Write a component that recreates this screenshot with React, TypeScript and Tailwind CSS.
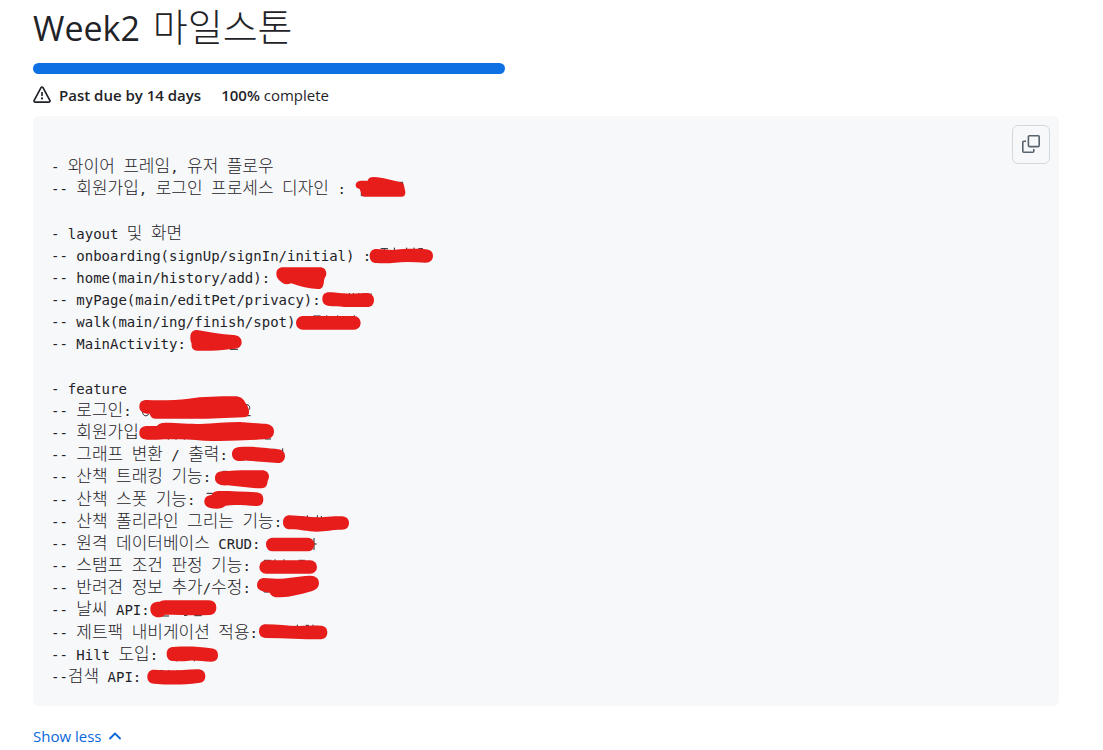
import { Fragment, useState } from "react";

const lines = [
  "- 와이어 프레임, 유저 플로우",
  "-- 회원가입, 로그인 프로세스 디자인 :",
  "",
  "- layout 및 화면",
  "-- onboarding(signUp/signIn/initial) :",
  "-- home(main/history/add):",
  "-- myPage(main/editPet/privacy):",
  "-- walk(main/ing/finish/spot)",
  "-- MainActivity:",
  "",
  "- feature",
  "-- 로그인:",
  "-- 회원가입",
  "-- 그래프 변환 / 출력:",
  "-- 산책 트래킹 기능:",
  "-- 산책 스폿 기능:",
  "-- 산책 폴리라인 그리는 기능:",
  "-- 원격 데이터베이스 CRUD:",
  "-- 스탬프 조건 판정 기능:",
  "-- 반려견 정보 추가/수정:",
  "-- 날씨 API:",
  "-- 제트팩 내비게이션 적용:",
  "-- Hilt 도입:",
  "--검색 API:",
];

function Line({ text }: { text: string }) {
  const parts = text.split(/([가-힣]+)/);
  return (
    <div className="h-[22px]">
      {parts.map((part, i) =>
        i % 2 === 1 ? (
          <span key={i} className="font-['Liberation_Mono','Noto_Sans_CJK_KR',monospace] text-[17px] font-light leading-none">
            {part}
          </span>
        ) : (
          <Fragment key={i}>{part}</Fragment>
        ),
      )}
    </div>
  );
}

/* Marker strokes that cover the assignee names. */
function Redactions() {
  return (
    <svg
      className="pointer-events-none absolute left-0 top-0"
      width="420"
      height="590"
      viewBox="33 116 420 590"
      aria-hidden="true"
    >
      <g stroke="#1f2328" strokeWidth="3" fill="none">
        <g transform="translate(260 145) scale(.33333)">
          <path d="M410 112h18v10M304 140v12h10M362 311h22M373 311v6M403 308v8M440 308v8M462 308v8M475 311h14" />
        </g>
        <g transform="translate(180 240) scale(.33333)">
          <path d="M508 159v8M520 159v8M537 159v8M550 159v8M573 160v38M400 228h22M411 228v6M440 226v8M473 226v8M494 230h14M523 226v8M150 328h24" />
        </g>
        <g transform="translate(40 380) scale(.33333)">
          <path d="M308 96c0 14 14 14 18 6M450 113h8M612 75c14-4 20 4 16 14M612 107h20M385 174v5M408 174v5M433 174v5M675 177h18M614 236v6M650 204v8M695 208h14M728 205v30M548 274h14" />
        </g>
        <g transform="translate(40 490) scale(.33333)">
          <path d="M500 10h18v8M780 80h10M802 76v8M832 76v8M844 78v6M700 144v8M728 144v8M765 144v8M822 144v36M822 162h8M672 211h22M705 208v6M732 208v6M775 211h20M672 292v14h14" />
        </g>
        <g transform="translate(40 590) scale(.33333)">
          <path d="M365 78h22M432 76h10M463 77h22M772 104v6M797 106h10M819 104v8M410 208v6M463 208v6M360 242h10M386 240v6M412 240v6M436 242h20" />
        </g>
      </g>
      <g fill="#e71d1c">
        <g transform="translate(260 145) scale(.33333)">
          <path d="M287 121c0-10 8-14 20-14h16c2-8 8-11 18-11 16 0 28 3 40 6l38 9c10 2 13 6 14 15l3 14c1 9-3 15-12 15H315c-8 0-12-4-12-12l-4-11c-7-1-12-4-12-11z" />
        </g>
        <g transform="translate(180 240) scale(.33333)">
          <path d="M569 48c0-14 8-21 20-21l48 3c30-3 70-5 100-2 15 1 22 9 22 20s-8 20-22 20c-32-2-65-4-92 0-18 2-38 2-56 1-12 0-20-8-20-21z" />
          <path d="M289 101c0-12 8-19 20-19h110c13 0 20 8 20 20 0 8-7 12-7 20-1 19-7 26-20 25-30-1-55-8-78-17-12 4-22 4-29-3-10-8-16-14-16-26z" />
          <path d="M427 177c0-14 8-20 20-20 25 0 37 4 62 4l51-2c13 0 22 8 22 21s-8 21-20 21h-70c-14-2-30-2-44-3-13-1-21-9-21-21z" />
          <rect x="348" y="228" width="194" height="41" rx="20" />
          <path d="M31 291c0-14 8-21 20-21 35 6 71 13 110 15 15 1 24 9 24 22 0 11-8 18-18 19-27 2-50 6-75 6H52c-12 0-19-9-17-21-3-5-4-12-4-20z" />
        </g>
        <g transform="translate(40 380) scale(.33333)">
          <path d="M298 80c0-14 8-20 22-20 40 1 86 1 126-4 42-6 90-7 137-7 19 0 28 8 34 21 8 10 11 20 10 29-1 9-7 12-17 13l-110 4H347c-10 0-15-5-18-15-18 1-31-7-31-21z" />
          <path d="M298 160c0-15 9-22 24-22h28c8-8 15-10 30-10 30 0 70 4 100 4 40-2 80-6 120-6l70 5c20 0 32 8 32 22 0 17-10 24-30 25-60 4-120 6-180 4-50-4-100-5-140-3h-32c-14-1-22-8-22-19z" />
          <path d="M576 222c0-13 8-20 22-21 44-3 81 3 117 7 13 2 20 10 20 20 0 13-9 22-22 21l-92-7c-8-1-13 2-22 1-14 0-23-8-23-21z" />
          <path d="M525 295c0-12 7-20 20-21 40-4 82-4 120-3 14 0 22 8 22 18 0 8-4 12-5 20-2 12-9 16-22 16-34-1-66-6-97-9-24 2-38-5-38-21z" />
        </g>
        <g transform="translate(40 490) scale(.33333)">
          <path d="M493 36c0-13 7-20 22-21 5-10 12-12 23-12 38 0 75 2 110 4 15 1 22 9 22 21 0 14-8 21-21 20-31-1-65-5-92-1-8 6-15 9-28 9-22 0-36-7-36-20z" />
          <path d="M729 97c0-14 8-21 20-21 37 1 68 8 103 5 20-2 40-3 54-2 14 1 21 9 21 20 0 13-8 20-22 20-29 0-46 5-75 6-28 0-48-7-80-7-14 0-21-8-21-21z" />
          <rect x="678" y="143" width="145" height="41" rx="20" />
          <rect x="658" y="211" width="173" height="40" rx="20" />
          <path d="M651 286c0-13 8-21 20-22l40 2c28 0 63-7 98-9 17-1 28 8 28 22 0 15-12 23-28 26-30 8-55 15-88 17-18 1-28-4-32-14-24-2-38-9-38-22z" />
        </g>
        <g transform="translate(40 590) scale(.33333)">
          <path d="M331 57c0-14 8-22 28-22 8-4 12-4 21-4h126c15 0 23 9 23 22 0 14-9 22-22 22-43 2-94-1-132-1-6 6-11 8-20 8-13 0-24-9-24-25z" />
          <path d="M657 123c0-13 8-20 20-20 35 0 65 5 98 5 24 0 46-2 65-1 15 0 22 8 22 20 0 14-8 21-22 21-52 0-104-3-163-4-13-1-20-9-20-21z" />
          <path d="M380 191c0-13 8-20 20-20 37-2 73-2 113 4 14 1 21 9 21 20 0 14-8 20-20 20-22 0-42-4-66-3-18 2-33 2-48 1-13 0-20-9-20-22z" />
          <path d="M322 260c0-13 8-21 20-21 47 4 87 1 130-1 16 0 24 8 24 21s-8 20-21 20c-44 6-89 6-132 2-14 0-21-9-21-21z" />
        </g>
      </g>
    </svg>
  );
}

function AlertIcon() {
  return (
    <svg width="18" height="18" viewBox="0 0 16 16" fill="currentColor" aria-hidden="true">
      <path d="M6.457 1.047c.659-1.234 2.427-1.234 3.086 0l6.082 11.378A1.75 1.75 0 0 1 14.082 15H1.918a1.75 1.75 0 0 1-1.543-2.575Zm1.763.707a.25.25 0 0 0-.44 0L1.698 13.132a.25.25 0 0 0 .22.368h12.164a.25.25 0 0 0 .22-.368Zm.53 3.996v2.5a.75.75 0 0 1-1.5 0v-2.5a.75.75 0 0 1 1.5 0ZM9 11a1 1 0 1 1-2 0 1 1 0 0 1 2 0Z" />
    </svg>
  );
}

function CopyIcon() {
  return (
    <svg width="18" height="18" viewBox="0 0 18 18" fill="none" stroke="currentColor" strokeWidth="1.6" aria-hidden="true">
      <rect x="6.4" y=".8" width="10.8" height="10.8" rx="1" />
      <path d="M4 6.2H1.8a1 1 0 0 0-1 1v9a1 1 0 0 0 1 1h9a1 1 0 0 0 1-1V14" />
    </svg>
  );
}

export default function App() {
  const [expanded, setExpanded] = useState(true);
  return (
    <main className="overflow-hidden bg-white pl-[33px] pr-11 font-['Open_Sans','Noto_Sans_CJK_KR',sans-serif] text-[15px] text-[#1f2328]">
      <h1 className="h-[63px] pt-1 text-[34px] leading-[48px]">
        Week2 <span className="ml-1 text-[38px] font-light leading-none">마일스톤</span>
      </h1>
      <div
        role="progressbar"
        aria-label="Milestone progress"
        aria-valuenow={100}
        className="h-[11px] w-[46%] rounded-full bg-[#0f70e3]"
      />
      <div className="flex h-[42px] items-center gap-5">
        <span className="flex items-center gap-2 font-semibold">
          <AlertIcon />
          Past due by 14 days
        </span>
        <span>
          <span className="font-semibold">100%</span> complete
        </span>
      </div>
      <section className="relative rounded-md bg-[#f6f8fa] px-[18px] pb-[18px] pt-10">
        {expanded && (
          <>
            <div className="flex min-h-[532px] flex-col justify-between whitespace-pre font-['DejaVu_Sans_Mono',monospace] text-[14px] leading-[22px]">
              {lines.map((text, i) => (
                <Line key={i} text={text} />
              ))}
            </div>
            <Redactions />
          </>
        )}
        <button
          type="button"
          aria-label="Copy"
          className="absolute right-[9px] top-[9px] flex h-[39px] w-[38px] items-center justify-center rounded-md border border-[#d1d9e0] pb-px text-[#59636e]"
        >
          <CopyIcon />
        </button>
      </section>
      <button
        type="button"
        onClick={() => setExpanded(!expanded)}
        className="mt-[19px] flex items-center gap-2 leading-[22px] text-[#0969da]"
      >
        {expanded ? "Show less" : "Show more"}
        <svg width="12" height="8" viewBox="0 0 12 8" fill="none" stroke="currentColor" strokeWidth="1.8" strokeLinecap="round" strokeLinejoin="round" aria-hidden="true">
          <path d={expanded ? "M1 6.5 6 1.5l5 5" : "M1 1.5l5 5 5-5"} />
        </svg>
      </button>
    </main>
  );
}
